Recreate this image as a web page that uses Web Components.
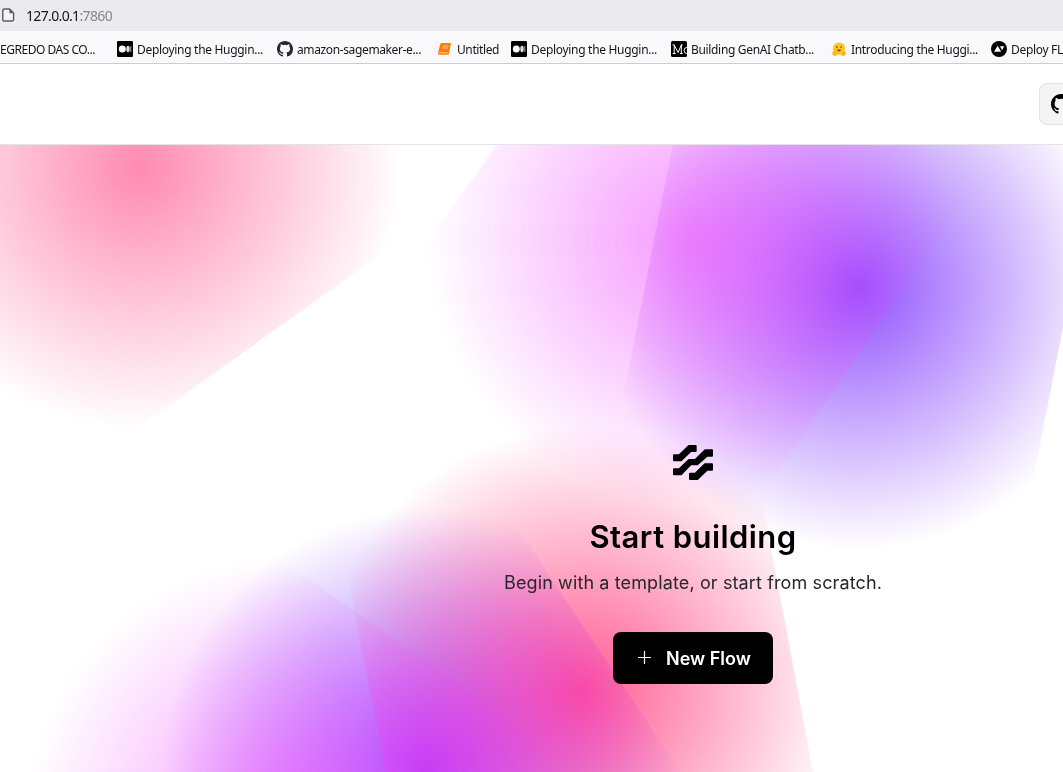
<!DOCTYPE html>
<html lang="en"><head><meta charset="utf-8"><title>Langflow</title>
<style>html,body{margin:0;height:100%;overflow:hidden;background:#fff}</style></head>
<body><flow-window></flow-window>
<script>
const define=(name,html,setup)=>customElements.define(name,class extends HTMLElement{
  constructor(){super();this.attachShadow({mode:'open'});}
  connectedCallback(){this.shadowRoot.innerHTML=html;if(setup)setup(this,this.shadowRoot);}
});
const GITHUB='<path d="M8 0C3.58 0 0 3.58 0 8c0 3.54 2.29 6.53 5.47 7.59.4.07.55-.17.55-.38 0-.19-.01-.82-.01-1.49-2.01.37-2.53-.49-2.69-.94-.09-.23-.48-.94-.82-1.13-.28-.15-.68-.52-.01-.53.63-.01 1.08.58 1.23.82.72 1.21 1.87.87 2.33.66.07-.52.28-.87.51-1.07-1.78-.2-3.64-.89-3.64-3.95 0-.87.31-1.59.82-2.15-.08-.2-.36-1.02.08-2.12 0 0 .67-.21 2.2.82a7.6 7.6 0 0 1 4 0c1.53-1.04 2.2-.82 2.2-.82.44 1.1.16 1.92.08 2.12.51.56.82 1.27.82 2.15 0 3.07-1.87 3.75-3.65 3.95.29.25.54.73.54 1.48 0 1.07-.01 1.93-.01 2.2 0 .21.15.46.55.38A8 8 0 0 0 16 8c0-4.42-3.58-8-8-8z"/>';
const ICONS={
 none:'',
 medium:'<rect width="16" height="16" rx="1.2"/><ellipse cx="5.3" cy="8" rx="3.5" ry="3.5" fill="#fff"/><ellipse cx="11" cy="8" rx="1.7" ry="3.3" fill="#ddd"/><rect x="13.3" y="5" width="1" height="6" rx=".5" fill="#aaa"/>',
 github:'<g fill="#24292f">'+GITHUB+'</g>',
 book:'<path d="M4.6 2H13.2Q14.2 2 13.9 3L11.8 12.9Q11.6 13.8 10.6 13.8H2Q.7 13.4 1.1 12L3.3 3.1Q3.6 2 4.6 2Z" fill="#ff7d00"/><path d="M5.8 5h5.6M5.3 7h5.6M2.1 11.8h8.6" stroke="#ffd9b5" stroke-width=".9" fill="none"/>',
 md:'<rect width="16" height="16" rx="1.5"/><path d="M1.8 12.5h2.9M3.2 12V4l3.9 7.5L10.3 4v8.5M1.6 3.8h1.7M9 12.5h2.7M10.2 3.8h1.5M15.8 6.3q-2.7.3-2.7 3.2t2.7 3" stroke="#fff" stroke-width="1" fill="none"/>',
 hug:'<circle cx="8" cy="7.6" r="6.1" fill="#ffc61a"/><path d="M1.3 11q1.8-1.7 4 .8l.8 2.4Q3 15.7 1.4 13.4zM14.7 11q-1.8-1.7-4 .8l-.8 2.4q3.1 1.5 4.7-.8z" fill="#ffb319"/><circle cx="5.8" cy="6" r=".8" fill="#453312"/><circle cx="10.2" cy="6" r=".8" fill="#453312"/><path d="M5.8 8.3q2.2 1 4.4 0Q9.7 10.4 8 10.4t-2.2-2.1z" fill="#5a3a21"/>',
 deploy:'<circle cx="8" cy="8" r="8"/><path d="M3 10.8 6.6 4.7 10.2 10.8ZM9 5.2h4.2l-2.1 4z" fill="#fff"/>'
};

/* Text that settles to a given width by letter spacing. */
define('fit-text','<style>:host{display:block;white-space:nowrap}span{display:inline-block}</style><span><slot></slot></span>',(h,r)=>{
  const s=r.querySelector('span'),t=+h.getAttribute('width');
  if(t)s.style.letterSpacing=(t-s.getBoundingClientRect().width)/h.textContent.length+'px';
});
define('url-bar',`<style>:host{display:flex;align-items:center;height:31px;background:#ebebed;font:14px "Noto Sans",sans-serif;color:#15141a;box-sizing:border-box;padding:0 0 0 2px;gap:11px}
svg{width:13px;height:16px;display:block;margin-top:-1px}em{font-style:normal;color:#86868b}fit-text{padding-bottom:1px}</style>
<svg viewBox="0 0 13 16"><path d="M2.8 2H7.6L11.6 6V12.6Q11.6 14 10.2 14H2.2Q.8 14 .8 12.6V3.4Q.8 2 2.8 2Z" fill="#f4f4f5" stroke="#5b5b66" stroke-width="1.4"/><path d="M7.4 2V6.2H11.6Z" fill="#5b5b66"/></svg>
<fit-text width="86">127.0.0.1<em>:7860</em></fit-text>`);
define('book-mark','<style>:host{display:flex;align-items:center;gap:4px;min-width:0}svg{width:16px;height:16px;flex:none;display:block}</style><svg viewBox="0 0 16 16"></svg><fit-text></fit-text>',(h,r)=>{
  r.querySelector('svg').innerHTML=ICONS[h.getAttribute('icon')];
  const f=document.createElement('fit-text');f.setAttribute('width',h.getAttribute('w'));f.textContent=h.getAttribute('label');
  r.querySelector('fit-text').replaceWith(f);
});
define('bookmark-bar',`<style>:host{display:grid;grid-template-columns:160px 160px 160px 74px 160px 160px 160px 160px;height:33px;box-sizing:border-box;border-bottom:1px solid #ccccd1;background:#f9f9fb;font:12px "Noto Sans",sans-serif;color:#15141a;padding-top:4px;overflow:hidden}
book-mark{margin-left:-43px}book-mark:first-of-type{margin-left:-20px}</style>
<book-mark icon="none" w="95" label="EGREDO DAS CO..."></book-mark>
<book-mark icon="medium" w="126" label="Deploying the Huggin..."></book-mark>
<book-mark icon="github" w="124" label="amazon-sagemaker-e..."></book-mark>
<book-mark icon="book" w="42" label="Untitled"></book-mark>
<book-mark icon="medium" w="126" label="Deploying the Huggin..."></book-mark>
<book-mark icon="md" w="123" label="Building GenAI Chatb..."></book-mark>
<book-mark icon="hug" w="127" label="Introducing the Huggi..."></book-mark>
<book-mark icon="deploy" w="52" label="Deploy FL"></book-mark>`);
define('app-header',`<style>:host{display:flex;justify-content:flex-start;align-items:center;height:81px;box-sizing:border-box;border-bottom:1px solid #e4e4e7;background:#fff;padding-left:1039px;padding-bottom:1px}
button{flex:none;width:120px;height:42px;border:1px solid #e2e2e5;border-radius:8px;background:#f4f4f5;padding:0 0 0 11px;display:flex;align-items:center}svg{width:20px;height:20px}</style>
<button aria-label="GitHub"><svg viewBox="0 0 16 16">${GITHUB}</svg></button>`);
define('glow-backdrop',`<style>:host{display:block;overflow:hidden;background:#fff}svg{display:block;width:1063px;height:627px}.glow{isolation:isolate}circle{mix-blend-mode:overlay}</style>
<svg viewBox="0 145 1063 627"><defs>
<radialGradient id="p"><stop stop-color="#ff3276" stop-opacity=".8"/><stop offset="1" stop-color="#ff3276" stop-opacity="0"/></radialGradient>
<radialGradient id="q"><stop stop-color="#ff3276" stop-opacity=".57"/><stop offset="1" stop-color="#ff3276" stop-opacity="0"/></radialGradient>
<radialGradient id="m"><stop stop-color="#f480ff" stop-opacity=".8"/><stop offset="1" stop-color="#f480ff" stop-opacity="0"/></radialGradient>
<radialGradient id="v"><stop stop-color="#7528fc" stop-opacity=".8"/><stop offset="1" stop-color="#7528fc" stop-opacity="0"/></radialGradient>
<clipPath id="a"><path d="M-200 0H737L-200 669Z"/></clipPath>
<clipPath id="b"><path d="M599 0H1106L706 574V800H34Z"/></clipPath>
<clipPath id="c"><path d="M701 0H1127L976 772H550Z"/></clipPath>
<clipPath id="d"><path d="M313 400H743L832 872H405Z"/></clipPath>
<clipPath id="e"><path d="M0 400H432L766 900H0Z"/></clipPath>
<clipPath id="f"><path d="M-200 223L800 923V1100H-200Z"/></clipPath>
</defs><g class="glow">
<circle cx="140" cy="168" r="262" fill="url(#q)" clip-path="url(#a)"/>
<circle cx="583" cy="690" r="264" fill="url(#p)" clip-path="url(#d)"/>
<circle cx="858" cy="288" r="262" fill="url(#v)" clip-path="url(#c)"/>
<circle cx="425" cy="770" r="262" fill="url(#v)" clip-path="url(#e)"/>
<circle cx="690" cy="240" r="264" fill="url(#m)" clip-path="url(#b)"/>
<circle cx="291" cy="820" r="264" fill="url(#m)" clip-path="url(#f)"/>
</g></svg>`);
define('new-flow-button',`<style>:host{display:block}button{display:flex;align-items:center;width:160px;height:52px;border:0;border-radius:8px;background:#000;color:#fff;font:600 18px Inter,sans-serif;padding:0 0 0 24px;gap:14px}svg{width:15px;height:15px;flex:none;margin-top:-2px}</style>
<button><svg viewBox="0 0 15 15"><path d="M7.5 1V14M1 7.5H14" stroke="#fff" stroke-width="1.2"/></svg><fit-text width="86"><slot></slot></fit-text></button>`);
define('empty-state',`<style>:host{display:flex;flex-direction:column;align-items:center;width:1386px;box-sizing:border-box;padding-top:300px;color:#000}
svg{display:block;width:40px;height:35px}h1{margin:38px 0 0;font:600 31px/38px Inter,sans-serif}p{margin:13px 0 0;font:18px/28px Inter,sans-serif;color:#27272a}new-flow-button{margin-top:35px}</style>
<svg viewBox="0 0 120 105"><g stroke="#000" stroke-width="6" stroke-linejoin="round"><path d="M3 31H19L48 3H68V18H53L24 46H3Z"/><path d="M3 73H19L48 45H67L96 16H117V32H102L73 58H53L24 88H3Z"/><path d="M51 86H67L96 58H117V74H102L73 102H51Z"/></g></svg>
<h1><fit-text width="207">Start building</fit-text></h1><p><fit-text width="378">Begin with a template, or start from scratch.</fit-text></p><new-flow-button>New Flow</new-flow-button>`);
define('flow-window',`<style>:host{display:grid;grid-template:31px 33px 81px 627px/1063px;width:1063px;height:772px;overflow:hidden}
main{display:grid;overflow:hidden}main>*{grid-area:1/1}empty-state{z-index:1}</style>
<url-bar></url-bar><bookmark-bar></bookmark-bar><app-header></app-header><main><glow-backdrop></glow-backdrop><empty-state></empty-state></main>`);
</script></body></html>
